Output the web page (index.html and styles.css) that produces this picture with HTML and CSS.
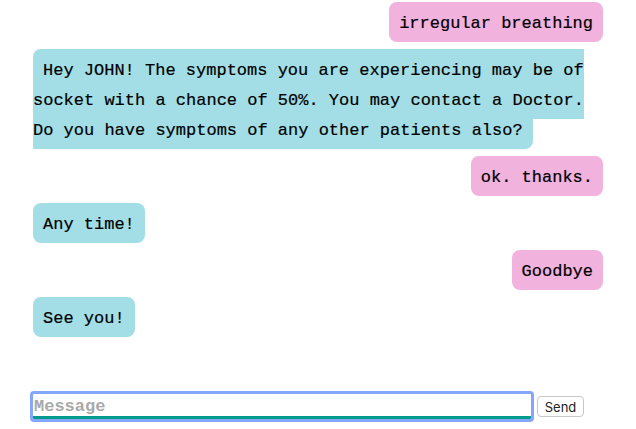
FILE: index.html
```html
<!DOCTYPE html>
<html lang="en">
<head>
<meta charset="utf-8">
<meta name="viewport" content="width=device-width, initial-scale=1">
<title>Chat</title>
<link rel="stylesheet" href="styles.css">
</head>
<body>
<main class="chat">
  <div class="messages">
    <p class="message user"><span>irregular breathing</span></p>
    <p class="message bot"><span>Hey JOHN! The symptoms you are experiencing may be of socket with a chance of 50%. You may contact a Doctor. Do you have symptoms of any other patients also?</span></p>
    <p class="message user"><span>ok. thanks.</span></p>
    <p class="message bot"><span>Any time!</span></p>
    <p class="message user"><span>Goodbye</span></p>
    <p class="message bot"><span>See you!</span></p>
  </div>
  <form class="composer">
    <input class="field" type="text" placeholder="Message" aria-label="Message">
    <button class="send" type="button">Send</button>
  </form>
</main>
</body>
</html>
```

FILE: styles.css
```css
* {
  box-sizing: border-box;
}

body {
  margin: 0;
  background: #fff;
  color: #000;
  font-family: "Courier New", "Liberation Mono", monospace;
  font-size: 17px;
  line-height: 30px;
}

.chat {
  padding: 9px 33px;
}

.message {
  margin: 0 0 17px;
}

.message span {
  padding: 12px 10px 9px;
  border-radius: 8px;
  -webkit-text-stroke: 0.2px #000;
}

.user {
  text-align: right;
}

.user span {
  background: #f2b2de;
}

.bot span {
  background: #a3dee6;
}

.composer {
  display: flex;
  align-items: center;
  gap: 6px;
  margin-top: 60px;
  padding-right: 19px;
}

.field {
  flex: 1;
  min-width: 0;
  height: 25px;
  padding: 2px 1px 0;
  border: 0;
  border-bottom: 3px solid #009b8c;
  outline: 3px solid #84a7fc;
  border-radius: 1px;
  font: bold 17px "Courier New", "Liberation Mono", monospace;
}

.field::placeholder {
  color: #a9a9a9;
  opacity: 1;
}

.send {
  width: 47px;
  height: 21px;
  padding: 0;
  border: 1px solid #c8c8c8;
  border-radius: 4px;
  background: #fff;
  color: #222;
  font: 13px Inter, "Liberation Sans", sans-serif;
}
```
